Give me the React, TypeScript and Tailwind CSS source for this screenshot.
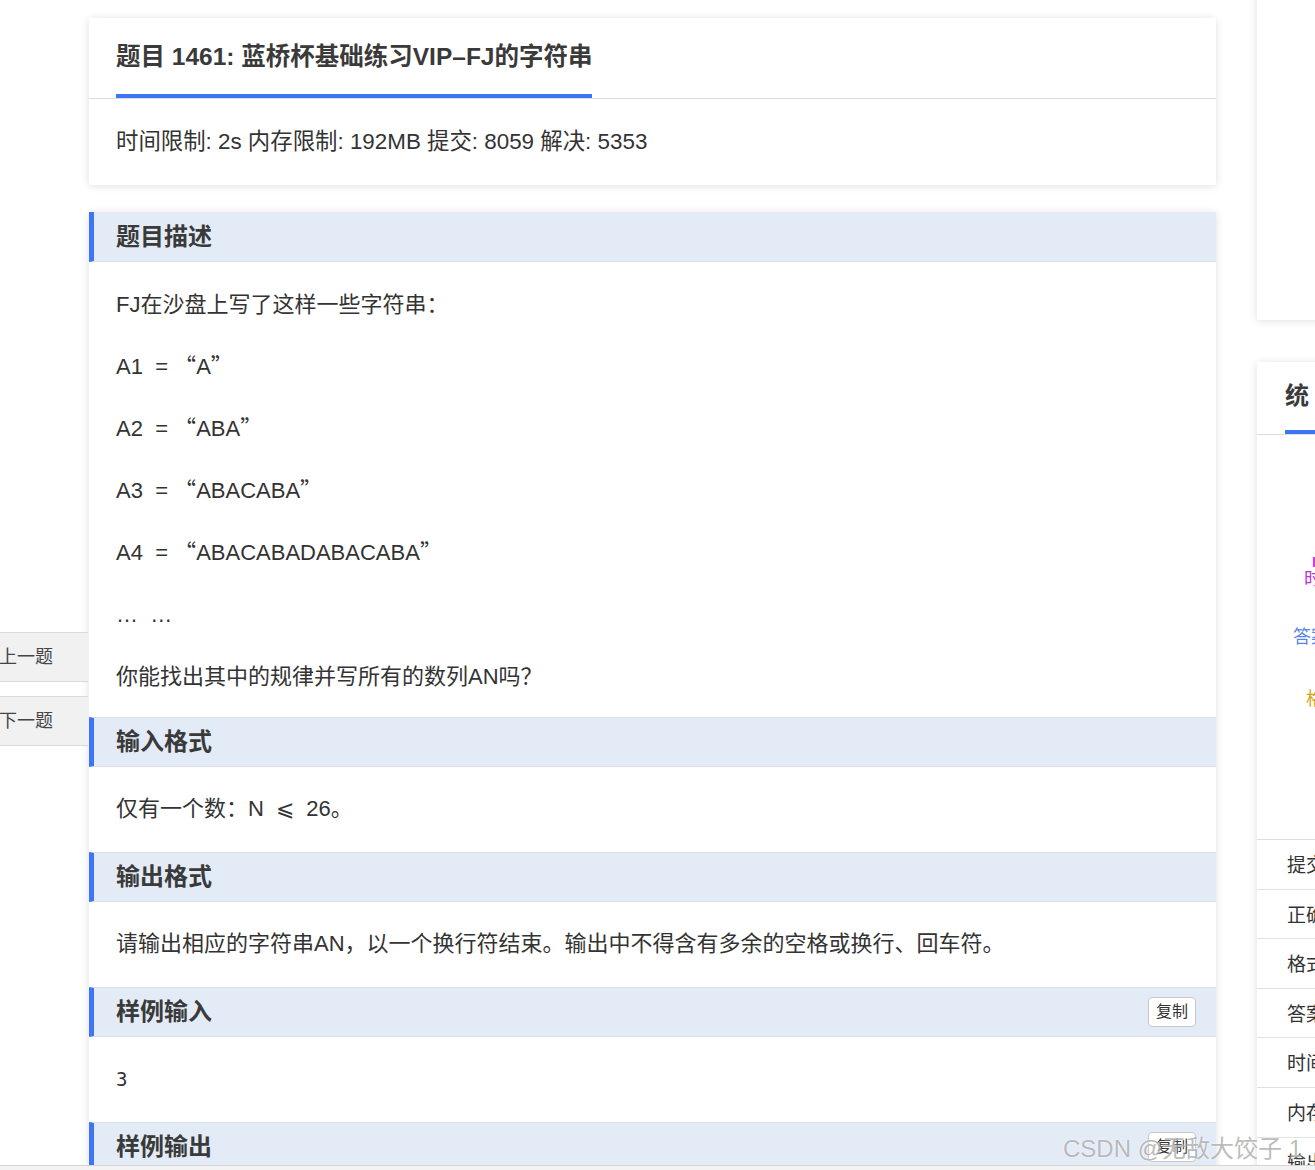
const FONT = { fontFamily: '"Liberation Sans", Arial, "Noto Sans CJK SC", sans-serif' };
const CJK = { fontFamily: '"Noto Sans CJK SC", sans-serif' };
const MONO = { fontFamily: '"DejaVu Sans Mono", "Liberation Mono", monospace' };

function SectionHeader({ title, copy, first }: { title: string; copy?: boolean; first?: boolean }) {
  return (
    <div
      className={
        "flex h-[50px] items-center justify-between border-l-[5px] border-b border-l-[#3e75f5] border-b-[#dcdfe6] bg-[#e3ebf7] pl-[22px] pr-[20px]" +
        (first ? "" : " border-t border-t-[#dcdfe6]")
      }
    >
      <span className="text-[24px] font-bold text-[#3a3a3a]">{title}</span>
      {copy && (
        <button className="h-[30px] rounded-[4px] border border-[#c8c8c8] bg-white px-[7px] text-[16px] leading-[28px] text-[#333]">
          复制
        </button>
      )}
    </div>
  );
}

// A1 = "A" lines use the CJK full-width quotes
function Eq({ name, value }: { name: string; value: string }) {
  return (
    <p className="h-[30px] whitespace-pre">
      {name}
      {"  = "}
      <span className="leading-none" style={CJK}>“</span>
      {value}
      <span className="leading-none" style={CJK}>”</span>
    </p>
  );
}

const statRows = ["提交", "正确", "格式", "答案", "时间", "内存", "输出"];

export default function App() {
  return (
    <div className="relative h-[1170px] w-[1315px] overflow-hidden bg-white text-[#333]" style={FONT}>
      <div className="flex items-start gap-[41px] pl-[89px]">
        {/* main column */}
        <div className="flex w-[1127px] shrink-0 flex-col gap-[27px] pt-[18px]">
          <div className="bg-white shadow-[0_1px_8px_rgba(0,0,0,0.13)]">
            <div className="border-b border-[#dcdcdc] px-[27px]">
              <div className="inline-block border-b-4 border-[#3e75f5] pb-[22px] pt-[24px] text-[24.5px] font-bold leading-[30px] text-[#3a3a3a]">
                题目 1461: 蓝桥杯基础练习VIP–FJ的字符串
              </div>
            </div>
            <div className="px-[27px] pb-[29px] pt-[28px] text-[22.4px] leading-[29px]">
              时间限制: 2s 内存限制: 192MB 提交: 8059 解决: 5353
            </div>
          </div>

          <div className="bg-white shadow-[0_1px_8px_rgba(0,0,0,0.13)]">
            <SectionHeader title="题目描述" first />
            <div className="flex flex-col gap-[32px] px-[27px] pb-[25px] pt-[28px] text-[22px] leading-[30px]">
              <p className="h-[30px]">FJ在沙盘上写了这样一些字符串：</p>
              <Eq name="A1" value="A" />
              <Eq name="A2" value="ABA" />
              <Eq name="A3" value="ABACABA" />
              <Eq name="A4" value="ABACABADABACABA" />
              <p className="h-[30px] whitespace-pre">{"…  …"}</p>
              <p className="h-[30px]">你能找出其中的规律并写所有的数列AN吗？</p>
            </div>
            <SectionHeader title="输入格式" />
            <div className="px-[27px] pb-[28px] pt-[27px] text-[22px] leading-[30px]">
              <p className="h-[30px] whitespace-pre">
                {"仅有一个数：N  "}
                <span className="leading-none" style={CJK}>⩽</span>
                {"  26。"}
              </p>
            </div>
            <SectionHeader title="输出格式" />
            <div className="px-[27px] pb-[28px] pt-[27px] text-[22px] leading-[30px]">
              <p className="h-[30px]">请输出相应的字符串AN，以一个换行符结束。输出中不得含有多余的空格或换行、回车符。</p>
            </div>
            <SectionHeader title="样例输入" copy />
            <div className="px-[27px] pb-[28px] pt-[27px] text-[19px] leading-[30px]" style={MONO}>
              <p className="h-[30px]">3</p>
            </div>
            <SectionHeader title="样例输出" copy />
            <div className="h-[80px]" />
          </div>
        </div>

        {/* right column */}
        <div className="flex w-[320px] shrink-0 flex-col gap-[42px]">
          <div className="mt-[-100px] h-[420px] bg-white shadow-[0_1px_8px_rgba(0,0,0,0.13)]" />
          <div className="bg-white shadow-[0_1px_8px_rgba(0,0,0,0.13)]">
            <div className="border-b border-[#dcdcdc] px-[28px]">
              <div className="inline-block border-b-4 border-[#3e75f5] pb-[19px] pt-[19px] text-[24px] font-bold leading-[30px] tracking-[12px] text-[#3a3a3a]">
                统计
              </div>
            </div>
            <div className="relative h-[405px] border-b border-[#dcdcdc] text-[18px]">
              <div className="absolute left-[56px] top-[122px] h-[10px] w-[2px] bg-[#d63be0]" />
              <span className="absolute left-[47px] top-[131px] text-[#b634d0]">时间超限</span>
              <span className="absolute left-[36px] top-[189px] text-[#5b86e5]">答案错误</span>
              <span className="absolute left-[49px] top-[251px] text-[#d4a320]">格式错误</span>
            </div>
            {statRows.map((r) => (
              <div key={r} className="flex h-[49.6px] items-center border-b border-[#e2e2e2] pl-[30px] pt-[4px] text-[19px]">
                {r}错误
              </div>
            ))}
          </div>
        </div>
      </div>

      {/* prev / next */}
      <div className="absolute left-[-20px] top-[632px] flex h-[50px] w-[108px] items-center border-y border-[#dadada] bg-[#f1f1f1] pl-[19px] text-[18px] text-[#444]">
        上一题
      </div>
      <div className="absolute left-[-20px] top-[696px] flex h-[50px] w-[108px] items-center border-y border-[#dadada] bg-[#f1f1f1] pl-[19px] text-[18px] text-[#444]">
        下一题
      </div>

      {/* watermark */}
      <div className="pointer-events-none absolute left-[1063px] top-[1131px] whitespace-nowrap text-[24px] text-[rgba(130,130,130,0.55)] [text-shadow:0_0_2px_#fff]">
        CSDN @无敌大饺子 1
      </div>

      {/* bottom strip */}
      <div className="absolute bottom-0 left-0 h-[5px] w-full border-t border-[#d5d5d5] bg-[#f3f3f3]" />
    </div>
  );
}
